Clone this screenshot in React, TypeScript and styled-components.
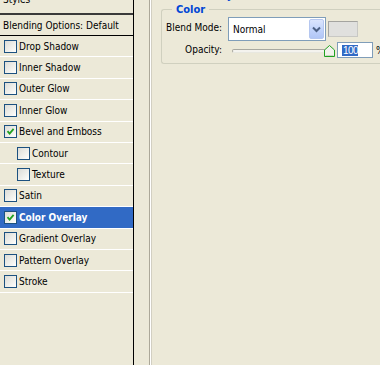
import styled, { createGlobalStyle } from "styled-components";

const GlobalStyle = createGlobalStyle`
  html, body {
    margin: 0;
    padding: 0;
    background: #ece9d8;
  }
  body {
    font-family: "DejaVu Sans Condensed", "DejaVu Sans", sans-serif;
    font-size: 10px;
    color: #000;
  }
`;

const Page = styled.div`
  display: flex;
  width: 380px;
  height: 365px;
  overflow: hidden;
  background: #ece9d8;
`;

const StyleList = styled.div`
  display: flex;
  flex-direction: column;
  width: 133px;
  flex-shrink: 0;
  border-right: 1px solid #000;
`;

const ListHeader = styled.div`
  height: 20px;
  margin-top: -7px;
  padding-left: 3px;
  line-height: 13px;
  border-bottom: 2px solid #3a3a3a;
`;

const TitleItem = styled.div`
  height: 20px;
  display: flex;
  align-items: center;
  padding-left: 3px;
  border-bottom: 1px solid #000;
`;

const Item = styled.div<{ $active?: boolean; $indent?: boolean }>`
  height: 20.4px;
  display: flex;
  align-items: center;
  gap: 2px;
  padding-left: ${(p) => (p.$indent ? "17px" : "4px")};
  border-bottom: 1px solid #fff;
  background: ${(p) => (p.$active ? "#316ac5" : "transparent")};
  color: ${(p) => (p.$active ? "#fff" : "#000")};
  font-weight: ${(p) => (p.$active ? "bold" : "normal")};
  white-space: nowrap;
`;

const Box = styled.span`
  width: 11px;
  height: 11px;
  flex-shrink: 0;
  border: 1px solid #1c5180;
  background: linear-gradient(135deg, #dcdcd7 0%, #f4f4f0 70%, #fff 100%);
  display: flex;
  align-items: center;
  justify-content: center;
`;

const Gutter = styled.div`
  width: 15px;
  flex-shrink: 0;
`;

const EffectPane = styled.div`
  flex: 1;
  display: flex;
  flex-direction: column;
  border-left: 1px solid #aca899;
  box-shadow: inset 1px 0 #fff, inset 2px 0 #d2cfc2;
`;

const PaneTitle = styled.div`
  height: 13px;
  margin-top: -11px;
  margin-left: 8px;
  line-height: 13px;
  font-size: 11px;
  font-weight: bold;
  color: #0046d5;
`;

const GroupBox = styled.fieldset`
  margin: 1px 0 0 11px;
  padding: 0 0 5px 0;
  border: 1px solid #d0d0bf;
  border-right: none;
  border-radius: 3px 0 0 3px;
  min-width: 0;
`;

const Legend = styled.legend`
  margin-left: 10px;
  padding: 0 4px;
  line-height: 13px;
  font-size: 11px;
  font-weight: bold;
  color: #0046d5;
`;

const FieldRow = styled.div<{ $h: number }>`
  display: flex;
  align-items: center;
  height: ${(p) => p.$h}px;
`;

const Label = styled.span<{ $lift?: number }>`
  width: 60px;
  text-align: right;
  margin-right: 6px;
  flex-shrink: 0;
  white-space: nowrap;
  position: relative;
  top: ${(p) => -(p.$lift ?? 0)}px;
`;

const Select = styled.div`
  width: 91px;
  height: 22px;
  border: 1px solid #7f9db9;
  background: #fff;
  display: flex;
  align-items: center;
  justify-content: space-between;
  padding-left: 4px;
  padding-right: 1px;
  flex-shrink: 0;
`;

const SelectText = styled.span`
  padding-top: 1px;
`;

const DropButton = styled.span`
  width: 15px;
  height: 20px;
  border: 1px solid #b5c7f0;
  border-radius: 2px;
  background: linear-gradient(180deg, #dbe5fd 0%, #c1d3fb 55%, #b1c6f6 100%);
  display: flex;
  align-items: center;
  justify-content: center;
  box-sizing: border-box;
`;

const Swatch = styled.span`
  width: 28px;
  height: 14px;
  margin-left: 2px;
  flex-shrink: 0;
  border: 1px solid #a4a4a0;
  border-right-color: #c8c8c4;
  border-bottom-color: #c8c8c4;
  background: #e0e0de;
`;

const Slider = styled.div`
  position: relative;
  width: 109px;
  height: 16px;
  flex-shrink: 0;
`;

const Track = styled.div`
  position: absolute;
  left: 4px;
  right: 10px;
  top: 7px;
  height: 2px;
  border: 1px solid #a8a8a0;
  border-bottom-color: #e8e8e0;
  border-radius: 2px;
  background: #f4f3ee;
`;

const Thumb = styled.svg`
  position: absolute;
  left: 96px;
  top: 3px;
`;

const NumberInput = styled.div`
  width: 30px;
  height: 14px;
  flex-shrink: 0;
  border: 1px solid #7f9db9;
  background: #fff;
  display: flex;
  align-items: center;
  padding-left: 4px;
`;

const Selected = styled.span`
  background: #316ac5;
  color: #fff;
  line-height: 11px;
  padding: 0 0 0 1px;
  font-family: "Liberation Sans", sans-serif;
  letter-spacing: -0.5px;
`;

const Percent = styled.span`
  margin-left: 3px;
`;

const Check = () => (
  <svg width="9" height="9" viewBox="0 0 9 9">
    <path d="M1.5 4.2 L3.6 6.6 L7.6 1.8" fill="none" stroke="#21a121" strokeWidth="1.8" />
  </svg>
);

const effects = [
  { name: "Drop Shadow" },
  { name: "Inner Shadow" },
  { name: "Outer Glow" },
  { name: "Inner Glow" },
  { name: "Bevel and Emboss", checked: true },
  { name: "Contour", indent: true },
  { name: "Texture", indent: true },
  { name: "Satin" },
  { name: "Color Overlay", checked: true, active: true },
  { name: "Gradient Overlay" },
  { name: "Pattern Overlay" },
  { name: "Stroke" },
];

export default function App() {
  return (
    <>
      <GlobalStyle />
      <Page>
        <StyleList>
          <ListHeader>Styles</ListHeader>
          <TitleItem>Blending Options: Default</TitleItem>
          {effects.map((e) => (
            <Item key={e.name} $active={e.active} $indent={e.indent}>
              <Box>{e.checked && <Check />}</Box>
              {e.name}
            </Item>
          ))}
        </StyleList>
        <Gutter />
        <EffectPane>
          <PaneTitle>Color Overlay</PaneTitle>
          <GroupBox>
            <Legend>Color</Legend>
            <FieldRow $h={26}>
              <Label $lift={2}>Blend Mode:</Label>
              <Select>
                <SelectText>Normal</SelectText>
                <DropButton>
                  <svg width="9" height="7" viewBox="0 0 9 7">
                    <path d="M1 1.5 L4.5 5 L8 1.5" fill="none" stroke="#4d6185" strokeWidth="2" />
                  </svg>
                </DropButton>
              </Select>
              <Swatch />
            </FieldRow>
            <FieldRow $h={16}>
              <Label $lift={1}>Opacity:</Label>
              <Slider>
                <Track />
                <Thumb width="11" height="12" viewBox="0 0 11 12">
                  <path d="M0.5 11.5 V5 L5.5 0.5 L10.5 5 V11.5 Z" fill="#f2f2ec" stroke="#21a121" />
                  <path d="M1.5 10.5 H9.5" stroke="#c8d8c0" />
                </Thumb>
              </Slider>
              <NumberInput>
                <Selected>100</Selected>
              </NumberInput>
              <Percent>%</Percent>
            </FieldRow>
          </GroupBox>
        </EffectPane>
      </Page>
    </>
  );
}
